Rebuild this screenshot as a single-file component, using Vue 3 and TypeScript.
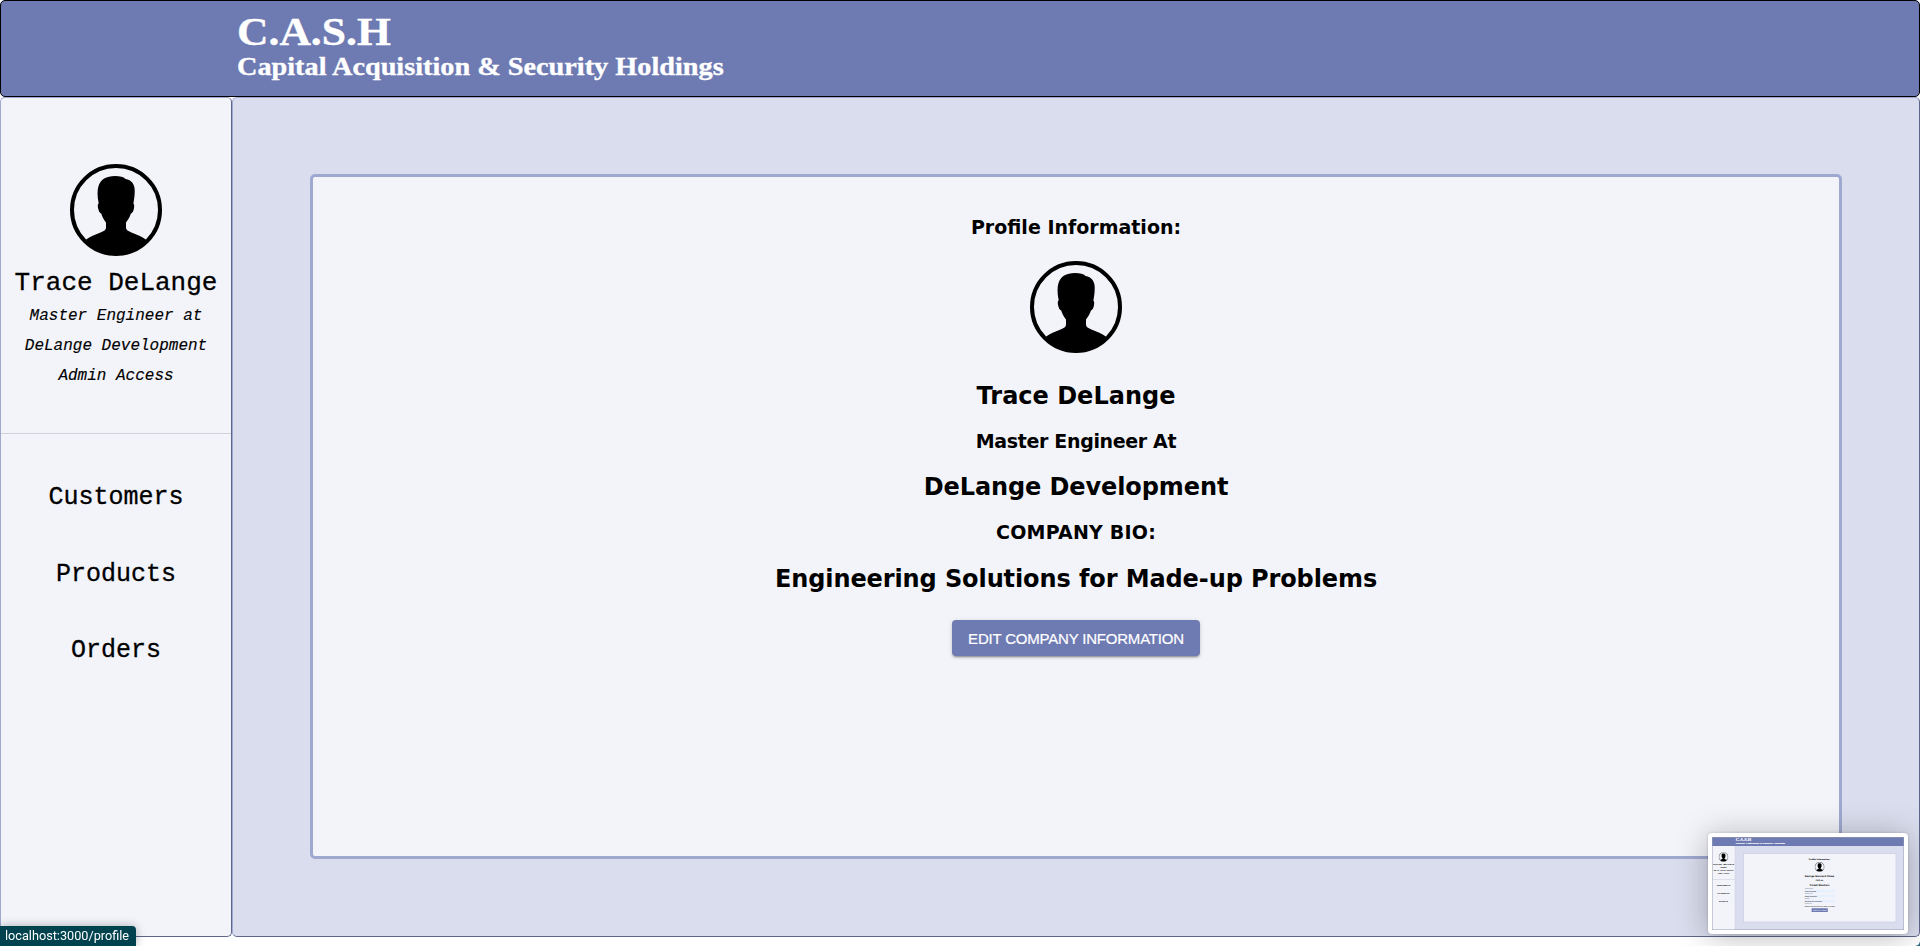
<script setup lang="ts">
interface ProfileLine {
  text: string
  kind: string
}

const person = 'Trace DeLange'
const summary: string[] = ['Master Engineer at', 'DeLange Development', 'Admin Access']
const links: string[] = ['Customers', 'Products', 'Orders']

const profile: ProfileLine[] = [
  { text: person, kind: 'name' },
  { text: 'Master Engineer At', kind: 'role' },
  { text: 'DeLange Development', kind: 'company' },
  { text: 'COMPANY BIO:', kind: 'label' },
  { text: 'Engineering Solutions for Made-up Problems', kind: 'bio' },
]

const previewFields = [
  { label: 'Company Name', value: 'Trace DeLange', y: 53.2 },
  { label: 'Company Role', value: 'Master Engineer', y: 58.1 },
  { label: 'Company', value: 'DeLange Development', y: 63 },
]
</script>

<template>
  <svg class="defs" width="0" height="0" aria-hidden="true">
    <defs>
      <symbol id="avatar" viewBox="0 0 92 92">
        <circle cx="46" cy="46" r="44" fill="none" stroke="#000" stroke-width="4" />
        <path
          d="M16.2 75.6 C20 72.5 25 70.7 30 68.7 C34 67 36 66 36 63.5 V58.5 C33.5 55.5 32.2 52.5 31.2 49.5 C29.4 49 28.6 46.5 28 43.8 C27.6 41.7 27.8 40 28.7 39.3 C27.3 33 27.2 27 28.3 22.8 C30.2 15.3 36.5 12 45 12 C50 12 53.5 12.8 55.5 15 C62 16 65 20.7 64.7 27.5 C64.7 32 64 36 63.4 39.5 C64.5 40.5 64.3 42.8 63.8 45 C63.3 47.5 62.3 49.3 60.9 49.6 C59.8 53 58.3 55.8 56 58.5 V63.5 C56 66 58.2 67.2 62 68.7 C67 70.7 72 72.5 75.8 75.6 L77.3 77.1 A44 44 0 0 1 14.7 77.1 Z"
        />
      </symbol>
    </defs>
  </svg>

  <div class="page">
    <header class="banner">
      <h1>C.A.S.H</h1>
      <h2>Capital Acquisition &amp; Security Holdings</h2>
    </header>

    <div class="body">
      <aside class="sidebar">
        <div class="identity">
          <svg class="avatar"><use href="#avatar" /></svg>
          <div class="person">{{ person }}</div>
          <div v-for="line in summary" :key="line" class="detail">{{ line }}</div>
        </div>
        <nav class="links">
          <a v-for="link in links" :key="link">{{ link }}</a>
        </nav>
      </aside>

      <main class="content">
        <section class="card">
          <h3 class="heading">Profile Information:</h3>
          <svg class="avatar"><use href="#avatar" /></svg>
          <div v-for="line in profile" :key="line.kind" :class="['line', line.kind]">{{ line.text }}</div>
          <button class="edit" type="button">EDIT COMPANY INFORMATION</button>
        </section>
      </main>
    </div>
  </div>

  <div class="status">localhost:3000/profile</div>

  <i class="corner"></i>

  <div class="preview">
    <svg viewBox="0 0 192 93" width="192" height="93">
      <rect width="192" height="93" fill="#dadded" />
      <rect width="192" height="9" fill="#6e7ab2" />
      <rect y="9" width="23" height="84" fill="#f3f4fa" />
      <path d="M23 9 V93 M0 42.5 H23" stroke="#c9cde3" stroke-width=".5" />
      <rect x="31.5" y="16.5" width="152.5" height="68.5" fill="#f3f4fa" stroke="#c8cee5" stroke-width=".7" />
      <g class="p-serif">
        <text x="23.8" y="4.3" font-size="4.3" textLength="15.5" lengthAdjust="spacingAndGlyphs">C.A.S.H</text>
        <text x="23.8" y="7.2" font-size="2.6" textLength="49" lengthAdjust="spacingAndGlyphs">Capital Acquisition &amp; Security Holdings</text>
      </g>
      <use href="#avatar" x="6.7" y="15.2" width="9.6" height="9.6" />
      <g class="p-mono">
        <text x="11.5" y="28.2" font-size="2.5">George Bernard</text>
        <text x="11.5" y="31" font-size="2.5">Shaw</text>
        <text x="11.5" y="34.1" font-size="1.6">CEO at Ticket Masters</text>
        <text x="11.5" y="37" font-size="1.6">Admin Access</text>
        <text x="11.5" y="49.3" font-size="2.5">Customers</text>
        <text x="11.5" y="57" font-size="2.5">Products</text>
        <text x="11.5" y="64.6" font-size="2.5">Orders</text>
      </g>
      <use href="#avatar" x="102.7" y="25" width="9.8" height="9.8" />
      <g class="p-sans">
        <text x="107.5" y="22.8" font-size="1.95">Profile Information:</text>
        <text x="107.5" y="39.9" font-size="2.4">George Bernard Shaw</text>
        <text x="107.5" y="44.4" font-size="1.9">CEO At</text>
        <text x="107.5" y="49" font-size="2.4">Ticket Masters</text>
      </g>
      <g v-for="field in previewFields" :key="field.label" class="p-form">
        <text x="92.7" :y="field.y - 0.9" font-size="1.2" opacity=".6">{{ field.label }}</text>
        <rect x="92.5" :y="field.y - 0.4" width="30.5" height="2.8" fill="#e8f0fe" />
        <text x="92.7" :y="field.y + 1.6" font-size="1.7">{{ field.value }}</text>
      </g>
      <g class="p-form">
        <text x="92.7" y="67.2" font-size="1.2" opacity=".6">Company Bio</text>
        <text x="92.7" y="69.7" font-size="1.6" textLength="30.3">Engineering Solutions for Made-up Proble</text>
      </g>
      <rect x="99.6" y="71.2" width="16.2" height="3.9" rx=".4" fill="#6e7ab2" />
      <text class="p-button" x="107.7" y="73.8" font-size="1.5">SUBMIT CHANGES</text>
      <rect x=".25" y=".25" width="191.5" height="92.5" fill="none" stroke="#9a9db4" stroke-width=".5" />
    </svg>
  </div>
</template>

<style>
body {
  margin: 0;
  overflow: hidden;
  background: #fff;
}
</style>

<style scoped>
.defs {
  position: absolute;
}

.page {
  display: flex;
  flex-direction: column;
  height: 937px;
  color: #000;
}

.banner {
  box-sizing: border-box;
  flex: none;
  height: 97px;
  padding: 7.5px 0 0 236px;
  border: 1px solid #000;
  border-radius: 5px;
  background: #6e7ab2;
  color: #fff;
  font-family: "Liberation Serif", serif;
}

.banner h1,
.banner h2 {
  width: max-content;
  transform-origin: 0 50%;
  white-space: nowrap;
  -webkit-text-stroke: 0.35px #fff;
}

.banner h1 {
  margin: 0;
  font-size: 40px;
  line-height: 46px;
  transform: scaleX(1.09);
}

.banner h2 {
  margin: -3px 0 0;
  font-size: 25.5px;
  line-height: 30px;
  transform: scaleX(1.108);
}

.body {
  display: flex;
  flex: 1;
  min-height: 0;
}

.sidebar,
.content {
  box-sizing: border-box;
  border: 1px solid;
  border-color: #9fa8d0 #5f658c #5f658c #9fa8d0;
  border-radius: 5px;
}

.sidebar {
  flex: none;
  width: 232px;
  background: #f3f4fa;
  font-family: "Liberation Mono", monospace;
  text-align: center;
  white-space: nowrap;
  -webkit-text-stroke: 0.3px #000;
}

.avatar {
  display: block;
  flex: none;
  width: 92px;
  height: 92px;
  margin: 0 auto;
}

.identity {
  box-sizing: border-box;
  height: 336px;
  padding-top: 66px;
  border-bottom: 1px solid #d2d3db;
}

.person {
  margin: 12px 0 3px;
  font-size: 26px;
  line-height: 30px;
}

.detail {
  font-size: 16px;
  font-style: italic;
  line-height: 30px;
  -webkit-text-stroke-width: 0.15px;
}

.links {
  display: flex;
  flex-direction: column;
  gap: 46.5px;
  padding-top: 49px;
  font-size: 25px;
  line-height: 30px;
}

.content {
  flex: 1;
  padding: 76px 77px;
  background: #dadded;
}

.card {
  box-sizing: border-box;
  display: flex;
  flex-direction: column;
  align-items: center;
  height: 685px;
  padding-top: 38px;
  border: 3px solid #9fa9d0;
  border-radius: 5px;
  background: #f3f4fa;
  font-family: "DejaVu Sans", Verdana, sans-serif;
  font-weight: bold;
}

.heading {
  margin: 0 0 22px;
  font-size: 19px;
  line-height: 24px;
}

.line {
  white-space: nowrap;
}

.name,
.company,
.bio {
  font-size: 24px;
  line-height: 30px;
}

.role,
.label {
  font-size: 19px;
  line-height: 24px;
}

.name {
  margin-top: 28px;
}

.role {
  margin: 18px 0 19px;
  letter-spacing: -0.35px;
}

.company {
  letter-spacing: -0.1px;
}

.label {
  margin: 18px 0 20px;
  letter-spacing: 0.2px;
}

.bio {
  letter-spacing: -0.1px;
}

.edit {
  width: 248px;
  height: 36px;
  margin-top: 26px;
  padding: 0;
  border: 0;
  border-radius: 4px;
  background: #6e7ab2;
  box-shadow: 0 3px 1px -2px rgba(0, 0, 0, 0.2), 0 2px 2px rgba(0, 0, 0, 0.14), 0 1px 5px rgba(0, 0, 0, 0.12);
  color: #fff;
  font: 15px "Liberation Sans", Arial, sans-serif;
  letter-spacing: -0.2px;
  white-space: nowrap;
  -webkit-text-stroke: 0.2px #fff;
}

.status {
  position: fixed;
  bottom: 0;
  left: 0;
  box-sizing: border-box;
  width: 136px;
  height: 20px;
  padding-left: 5px;
  border-top-right-radius: 4px;
  background: #00434f;
  box-shadow: 0 0 10px rgba(0, 0, 0, 0.3);
  color: #fff;
  font: 12.7px/20px Roboto, sans-serif;
  white-space: nowrap;
}

.corner {
  position: fixed;
  right: 0;
  bottom: 0;
  width: 4px;
  height: 4px;
  background: radial-gradient(circle at 0 0, transparent 3px, #2d6688 4px);
}

.preview {
  position: fixed;
  right: 12px;
  bottom: 12px;
  box-sizing: border-box;
  width: 200px;
  height: 101px;
  padding: 4px;
  border-radius: 4px;
  background: #fff;
  box-shadow: 0 0 3px rgba(0, 0, 0, 0.2), 0 3px 32px rgba(0, 0, 0, 0.28);
}

.preview svg {
  display: block;
}

.p-serif {
  fill: #fff;
  stroke: #fff;
  stroke-width: 0.1px;
  font-family: "Liberation Serif", serif;
  font-weight: bold;
}

.p-mono {
  font-family: "Liberation Mono", monospace;
  font-weight: bold;
  text-anchor: middle;
}

.p-sans {
  font-family: "DejaVu Sans", sans-serif;
  font-weight: bold;
  text-anchor: middle;
}

.p-form {
  font-family: "Liberation Sans", sans-serif;
}

.p-button {
  fill: #fff;
  font-family: "Liberation Sans", sans-serif;
  text-anchor: middle;
}
</style>
